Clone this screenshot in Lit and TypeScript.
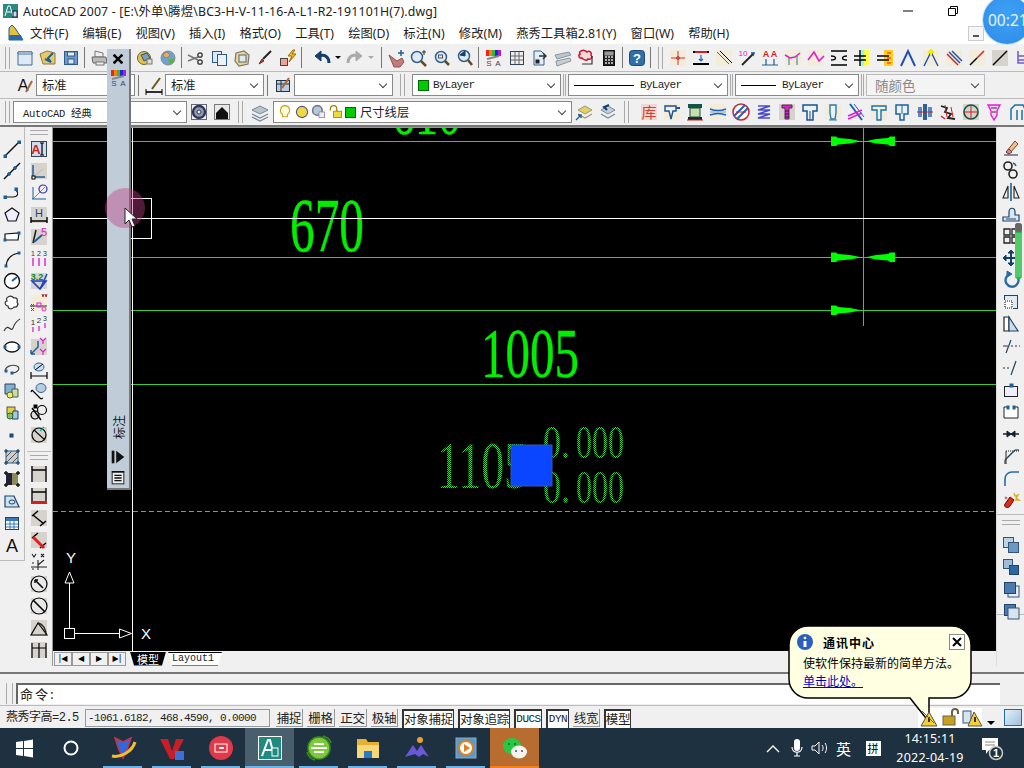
import { LitElement, html, css } from "lit";
import { customElement } from "lit/decorators.js";
import { unsafeSVG } from "lit/directives/unsafe-svg.js";

const l = (a: number, b: number, c: number, d: number, col = "#000", w = 1) =>
  `<line x1="${a}" y1="${b}" x2="${c}" y2="${d}" stroke="${col}" stroke-width="${w}"/>`;
const r = (x: number, y: number, w: number, h: number, f = "#fff", s = "#000") =>
  `<rect x="${x}" y="${y}" width="${w}" height="${h}" fill="${f}" stroke="${s}"/>`;
const c = (x: number, y: number, R: number, f = "none", s = "#000", w = 1) =>
  `<circle cx="${x}" cy="${y}" r="${R}" fill="${f}" stroke="${s}" stroke-width="${w}"/>`;
const p = (d: string, f = "none", s = "#000", w = 1) =>
  `<path d="${d}" fill="${f}" stroke="${s}" stroke-width="${w}"/>`;
const t = (x: number, y: number, v: string, col = "#000", size = 8, w = 400) =>
  `<text x="${x}" y="${y}" fill="${col}" font-size="${size}" font-weight="${w}" font-family="Liberation Sans" text-anchor="middle">${v}</text>`;
const B = "#1f5f96", DB = "#123f6c", M = "#e020d0", bg = (f: string) => `<rect x="2" y="2" width="16" height="16" fill="${f}"/>`;
const beige = bg("#f2ecd8"), gray = bg("#d6d2cc");

const I: Record<string, string> = {
  new: p("M3 4h14v13H3z", "#dfeaf5", "#3d6f99") + p("M3 4h14v2H3z", "#fff", "#3d6f99"),
  open: p("M2 6l7-3 8 2v11H5z", "#e8c96a", "#8a7a3a") + p("M15 5l-5 5 3 4-6-3", "none", B, 2),
  save: r(3.5, 3.5, 13, 13, "#6e9ac6", "#2b5b8c") + r(6.5, 4, 7, 4, "#eef", "#2b5b8c") + r(7, 11, 6, 5, "#d8e4ef", "#2b5b8c"),
  print: p("M6 3l8 2v4H6z", "#eee", "#777") + p("M3 9h14l1 6H4z", "#bbb", "#666") + r(7, 14, 8, 3, "#eee", "#777"),
  pub: c(9, 10, 6.5, "#e5c04a", "#6a6a30") + p("M6 7l6-2 3 5-6 3z", "#7aa0c8", "#355") + r(12, 11, 5, 5, "#ddd", "#777"),
  globe: c(10, 10, 7, "#6aa3d8", "#888") + p("M5 6l4-2 3 3-3 3-3-1z", "#e8b040", "#a77") + p("M10 12l5-2 1 4-4 3z", "#5ab050", "#7a7"),
  cut: c(14, 7, 2.2, "none", "#333", 1.3) + c(14, 14, 2.2, "none", "#333", 1.3) + l(2, 7, 12, 12, "#777", 1.6) + l(2, 13, 12, 9, "#777", 1.6),
  copy: r(3.5, 3.5, 9, 11, "#dce8f3", "#2b5b8c") + r(8.5, 6.5, 9, 11, "#eaf2f9", "#2b5b8c"),
  paste: p("M4 5l8-2 5 4-1 9-9 2-4-5z", "#e8d48a", "#777", 1.2) + r(7, 7, 7, 7, "#dfe9f2", "#567"),
  brush: p("M4 16l3-5 2 2z", "#c33", "#633") + l(8, 11, 16, 3, "#222", 2),
  zap: r(2.5, 10.5, 7, 7, "#f0a090", "#444") + p("M15 2l-5 6h4l-3 6 7-8h-4l3-4z", "#f0c020", "#a06a00"),
  undo: p("M17 15c0-6-4-9-10-7", "none", DB, 3) + p("M3 8l6-5v10z", DB, DB),
  redo: p("M3 15c0-6 4-9 10-7", "none", "#aaa", 3) + p("M17 8l-6-5v10z", "#aaa", "#aaa"),
  dd: p("M2 8h6l-3 3z", "#000", "none"),
  dd2: p("M2 8h6l-3 3z", "#aaa", "none"),
  hand: p("M3 7l8 6 5-3 2 4-4 5H8z", "#c77a7a", "#855") + p("M15 2v6M12 5h6", "none", B, 1.5),
  zplus: c(8, 9, 5.5, "#dfeaf5", "#34608a", 1.5) + l(12, 13, 17, 18, "#6a4a20", 2.5) + p("M15 2v5M13 4h4", "none", "#333"),
  zwin: c(9, 9, 5.5, "#dfeaf5", "#34608a", 1.5) + r(6.5, 7, 4, 3, "none", "#555") + l(13, 13, 17, 17, "#6a4a20", 2.5),
  zprev: c(9, 8, 5.5, "#dfeaf5", "#34608a", 1.5) + p("M5 7l5-4v5z", DB, DB) + l(13, 12, 17, 17, "#6a4a20", 2.5),
  pal: `<rect x="3" y="2" width="3" height="6" fill="#e22"/><rect x="6" y="2" width="3" height="6" fill="#e80"/><rect x="9" y="2" width="3" height="6" fill="#3b3"/><rect x="12" y="2" width="3" height="6" fill="#22d"/><rect x="15" y="2" width="3" height="6" fill="#a2c"/>` + l(4, 11, 16, 8, "#888", 2) + t(6, 18, "S", "#446", 8) + t(15, 18, "A", "#446", 8),
  grid: r(3.5, 3.5, 13, 13, "#eee", "#345") + p("M8 4v12M12 4v12M4 8h12M4 12h12", "none", "#666"),
  docarr: p("M4 3h7l3 3v11H4z", "#e3edf6", "#34608a") + p("M9 8h7M13 5l3 3-3 3", "none", "#333", 1.4) + r(6, 12, 3, 3, "#222", "#222"),
  pipes: p("M2 7l14-3 2 3-14 4z", "#bcc6cd", "#8b98a0") + p("M3 13l14-3 1 3-14 5z", "#c7cfd4", "#8b98a0"),
  cloud: p("M5 3c3-2 5 0 6 1 3-2 5 1 4 3 2 2 0 5-3 4 0 2-5 1-6-1-3 1-4-3-2-4-1-1 0-3 1-3z", "#f3dada", "#d01830", 1.6) + p("M16 8v8H6", "none", "#333", 1.2),
  calc: r(4.5, 2.5, 11, 15, "#222", "#111") + r(6, 4, 8, 3, "#999", "#999") + p("M6 9h2M9 9h2M12 9h2M6 12h2M9 12h2M12 12h2M6 15h2M9 15h2M12 15h2", "none", "#ddd", 1.6),
  help: `<rect x="2.5" y="2.5" width="15" height="15" rx="3" fill="#2f6ea8" stroke="#1a4a78"/>` + t(10, 15, "?", "#fff", 13, 700),
  y1: beige + p("M10 3v14M3 10h14", "none", "#d03030") + c(10, 10, 1.5, "none", "#d03030"),
  y2: l(2, 4, 18, 4, "#000", 2) + l(2, 16, 18, 16, "#000", 2) + p("M10 7v6M8 11l2 2 2-2", "none", "#1f5fd0", 1.2) + l(4, 4, 16, 4, "#d02020", 2),
  y3: beige + l(3, 4, 15, 16, "#d03030") + l(6, 3, 18, 15, "#000", 1),
  y4: t(6, 8, "10", M, 8) + l(5, 17, 17, 5, "#222", 1.8) + p("M14 5l3 0-1 3", "none", B, 1.4),
  y5: t(6, 9, "A", "#d02020", 9, 700) + t(14, 9, "A", "#d02020", 9, 700) + p("M2 17h16M6 17v-6M14 17v-6", "none", B, 1.2),
  y6: beige + p("M2 7l5 3 5-1 5-4", "none", M, 1.5) + p("M6 17v-7M14 17V8", "none", "#2d7a9a"),
  y7: beige + p("M2 12l6-8 5 9 5-5", "none", M, 1.6),
  y8: p("M2 3h16M2 17h16M2 8c6 0 6 4 0 4M18 8c-6 0-6 4 0 4", "none", "#000", 1.4),
  y9: `<rect x="9" y="2" width="3" height="16" fill="#8fe"/><rect x="12" y="2" width="5" height="16" fill="#ff4"/>` + p("M2 8h12M2 12h12M8 2v16", "none", "#000", 1.4),
  y10: `<rect x="9" y="2" width="9" height="16" fill="#fc2"/>` + p("M2 8h12M2 12h12", "none", "#000", 1.6) + p("M12 5h4M12 10h4M12 15h4", "none", "#f11", 1.2),
  y11: p("M3 18L10 3l7 15", "none", "#1f4fb0", 2),
  y12: beige + p("M3 18L10 4l7 14", "none", "#1f4fb0", 1.4) + p("M7 5l3-3 3 3M10 2v6", "none", "#ee0", 2),
  y13: beige + l(3, 6, 14, 17, "#d02020", 1.4) + l(5, 4, 16, 15, "#1f4fb0", 1.4) + l(8, 3, 18, 13, "#1f4fb0", 1.4),
  y14: beige + l(3, 17, 10, 10, "#000", 1.4) + l(10, 10, 17, 3, "#d02020", 1.4),
  y15: gray + l(3, 17, 17, 3, "#000", 1.5),
  y16: p("M5 3v12h10M5 8h8M5 12h8", "none", "#6a5acd", 1.5),
  z1: bg("#f2d8d4") + `<text x="10" y="16" fill="#d04030" font-size="15" font-family="Noto Sans CJK SC" text-anchor="middle">库</text>`,
  z2: beige + p("M3 4h11v5h-3l-2 8-2-8H3z", "#e8f0fa", "#1f4f8f", 1.4) + l(14, 6, 18, 6, "#1f4f8f", 2),
  z3: `<rect x="3" y="2" width="14" height="4" fill="#154"/><rect x="3" y="15" width="14" height="3" fill="#222"/><rect x="5" y="6" width="10" height="9" fill="#cda" stroke="#154"/>` + l(2, 18, 18, 18, "#d02020"),
  z4: beige + p("M2 7c5 2 11 2 16 0M2 13c5-2 11-2 16 0", "none", "#1f60c0", 1.5) + p("M2 10h16", "none", "#7ab"),
  z5: c(10, 10, 8, "#fff", "#c03030", 1.6) + p("M3 14L14 3M6 17L17 6", "none", "#2a5fc0", 2) + l(5, 10, 15, 10, "#d02020", 1),
  z6: p("M4 4h12L4 8h12L4 12h12L4 16h12", "none", "#4a4ad0", 1.6),
  z7: gray + p("M5 3h10v3h-3v11H8V6H5z", M, "#503050") + p("M8 9h4M8 12h4M8 15h4", "none", "#222"),
  z8: p("M3 3h14v6h-4v9H7V9H3z", "#e8f2fa", "#1f4f8f", 1.5) + p("M10 9v9", "none", "#1f4f8f"),
  z9: beige + p("M7 3h6v8l-1 6H8l-1-6z", "#e8f4fa", "#2a7aaa", 1.4) + l(6, 18, 14, 18, "#2a7aaa"),
  z10: l(4, 2, 16, 18, "#2060b0", 2) + l(8, 2, 18, 15, "#2060b0", 1) + p("M2 14l14-6M2 17l14-6", "none", M, 1.5),
  z11: beige + p("M3 4h14v4h-5v10H8V8H3z", "#e8f2fa", "#1f6f9f", 1.4),
  z12: p("M4 3h12v9h-4v6H8v-6H4z", "#e8f2fa", "#1f5f9f", 1.5) + l(10, 3, 10, 12, "#1f5f9f"),
  z13: `<rect x="3" y="5" width="4" height="10" fill="#5a8ac0"/><rect x="13" y="5" width="4" height="10" fill="#5a8ac0"/><rect x="8" y="2" width="4" height="16" fill="#2f5fa0"/>` + l(2, 10, 18, 10, "#b22"),
  z14: p("M3 4l6 2-2 4 6 2-3 4 7 1", "none", "#222", 1.8) + p("M7 3l2 12M13 5l2 10", "none", "#d02020", 1) + l(3, 14, 7, 17, "#d02020", 1.4),
  z15: gray + c(10, 10, 7, "none", "#154", 1.6) + p("M10 3v14M3 10h14", "none", "#d02020"),
  z16: p("M4 3h12l-3 6v4l-3 5-3-5V9z", "#f2d0f2", M, 1.4) + p("M7 6h6M8 10h4", "none", "#333"),
  z17: p("M4 18V7l4-4h8l2 4v11M10 8v10M15 8v10", "none", "#1f6f9f", 1.5),
  tstyle: t(8, 16, "A", "#111", 16) + l(11, 17, 17, 6, "#aa6633", 2),
  dstyle: l(2, 17, 18, 17, "#000", 1.6) + p("M2 14v6M18 14v6", "none", "#000") + l(8, 14, 16, 3, "#6a5a20", 2),
  tbl: r(3.5, 5.5, 13, 11, "#bcd", "#234") + p("M4 9h12M8 6v10", "none", "#234") + l(9, 13, 16, 3, "#a63", 2),
  gear: c(10, 10, 6, "#8aa0b5", "#335", 2.4) + c(10, 10, 2, "#eee", "#335") + r(2.5, 2.5, 15, 15, "none", "#667"),
  house: r(2.5, 2.5, 15, 15, "#e8e8e8", "#777") + p("M4 11l6-6 6 6v6H4z", "#111", "none"),
  layers: p("M2 8l8-4 8 4-8 4z", "#b9c4cc", "#789") + p("M2 12l8 4 8-4", "none", "#789", 1.2) + p("M2 15l8 4 8-4", "none", "#789", 1.2),
  laycur: p("M4 8l7-4 7 4-7 4z", "#e8d060", "#997") + p("M4 12l7 4 7-4", "none", "#997", 1.2) + p("M2 18l5-5M4 13h3v3", "none", B, 1.4),
  layprev: p("M4 8l7-4 7 4-7 4z", "#c7d0d8", "#789") + p("M4 12l7 4 7-4", "none", "#789", 1.2) + p("M12 3l-5 2 3 3", "none", DB, 2),
  line: l(3, 17, 17, 3, "#111", 1.4) + r(2, 16, 2.5, 2.5, B, B) + r(16, 2, 2.5, 2.5, B, B),
  xline: l(2, 18, 18, 2, "#111", 1.4) + c(7, 13, 1.4, B, B) + c(13, 7, 1.4, B, B),
  pline: p("M3 14h8c5 0 6-4 3-7", "none", "#111", 1.2) + r(2, 13, 2.5, 2.5, B, B) + r(13, 5, 2.5, 2.5, B, B),
  poly: p("M10 3l7 5-3 8H6L3 8z", "#eef", "#111", 1.2),
  rect: p("M3 7l14-1-1 7H3z", "#fff", "#111", 1.2) + r(2, 12, 2, 2, B, B) + r(16, 5, 2, 2, B, B),
  arc: p("M4 17C5 9 10 5 17 4", "none", "#111", 1.2) + r(3, 16, 2, 2, B, B) + r(16, 3, 2, 2, B, B),
  circ: c(10, 10, 7.5, "#fff", "#111", 1.4) + l(10, 10, 15, 6, B, 2),
  spline0: p("M6 4c3-2 5 0 6 1 3-1 4 2 3 4 2 2 0 6-3 5-2 3-6 2-6-1-3 0-4-5-1-5-1-2 0-4 1-4z", "#fff", "#333", 1.2),
  spl: p("M2 16c4-9 7 2 9-3 2-6 4-7 7-9", "none", "#333", 1.1),
  ell: `<ellipse cx="10" cy="10" rx="7.5" ry="5" fill="#fff" stroke="#111" stroke-width="1.3"/>` + r(2, 9, 2, 2, B, B) + r(16, 9, 2, 2, B, B),
  earc: p("M4 13c-3-5 6-8 11-6 4 2 1 7-5 7", "none", "#444", 1.2) + r(9, 13, 2, 2, B, B) + r(3, 11, 2, 2, B, B),
  ins: p("M3 3h10v10H3z", "#7fb0d8", "#345") + p("M10 8h6v8h-6z", "#c7e0a0", "#555") + c(8, 14, 3, "#ee6", "#663"),
  blk: r(5, 4, 8, 7, "#e0d040", "#555") + p("M11 8h5v8h-6z", "#a8c8e0", "#246") + c(8, 13, 3, "#7fc070", "#363"),
  pt: r(8, 9, 3, 3, B, DB),
  hatch: r(4, 4, 12, 12, "#ccc", B) + p("M4 10l6-6M4 16L16 4M10 16l6-6", "none", "#555") + p("M2 4h4M14 4h4M2 16h4M14 16h4M4 2v4M16 2v4M4 14v4M16 14v4", "none", DB, 1.2),
  grad: `<rect x="4" y="4" width="12" height="12" fill="#8a8a5a"/>` + p("M2 4h4M14 4h4M2 16h4M14 16h4M4 2v4M16 2v4M4 14v4M16 14v4", "none", "#111", 1.4) + `<rect x="4" y="4" width="6" height="12" fill="#223"/>`,
  region: p("M3 5h9l5 11H3z", "#cde2f2", "#246", 1.2) + `<ellipse cx="10" cy="11" rx="3" ry="2" fill="none" stroke="#246"/>`,
  table: r(3.5, 4.5, 13, 12, "#fff", "#246") + `<rect x="4" y="5" width="12" height="3" fill="#3a7ab8"/>` + p("M4 11h12M4 14h12M8 8v8M12 8v8", "none", "#3a7ab8"),
  mtext: `<text x="10" y="17" font-size="18" font-family="Liberation Sans" text-anchor="middle" fill="#111">A</text>`,
  dtxt: r(2.5, 2.5, 15, 15, "#cde", "#345") + t(7, 15, "A", "#d02020", 13, 700) + p("M13 4v12M11 4h4M11 16h4", "none", "#000", 1.2),
  dlin: gray + p("M4 16V4M4 16h12", "none", B, 1.5) + l(4, 16, 14, 8, "#bbb") + r(3, 15, 3, 3, "#fff", "#000"),
  dord: p("M4 16l12-12", "none", "#888") + c(14, 6, 4, "none", "#3030b0", 1.2) + p("M3 16h14M4 4v12", "none", B, 1),
  dh: gray + p("M2 16h16M2 12v6M18 12v6", "none", "#000", 1.4) + t(10, 12, "H", "#1f3f8f", 11),
  dlead: gray + l(4, 16, 7, 3, "#222", 1.6) + l(5, 15, 13, 8, B, 2) + t(15, 9, "5", M, 11),
  dnum: t(4, 7, "1", "#333", 7) + t(10, 7, "2", "#333", 7) + t(16, 7, "3", "#333", 7) + p("M4 9v8M10 9v8M16 9v8", "none", M, 1.4),
  dtol: gray + t(8, 9, "3.2", "#0a8a2a", 9, 700) + p("M3 10h14l-6 8z", "none", "#1f3fc0", 1.6) + l(11, 18, 18, 3, "#1f3fc0", 1.4),
  dyy: beige + l(1, 13, 18, 13, "#333") + r(8, 10, 4, 4, "none", M) + c(15, 16, 2, "none", M) + p("M13 1l1 3 1-3M16 1l1 3 1-3M2 11l3 3M5 11l-3 3M2 15l3 3M5 15l-3 3", "none", "#b03030"),
  dnum2: t(4, 10, "1", "#333", 8) + t(10, 8, "2", "#333", 8) + t(16, 6, "3", "#333", 7) + p("M4 12v5M10 11v5M16 8v5", "none", M, 1.3),
  dxy: gray + p("M11 1l3 3 3-3M14 4v3M11 12l3 3 3-3M14 15v3", "none", M, 1.2) + p("M2 17l7-7V4M2 17h4M2 17v-4", "none", B, 1.5),
  ddia: p("M2 17h16M2 13v7M18 13v7", "none", "#000", 1.2) + `<ellipse cx="10" cy="8" rx="5" ry="4" fill="#cde" stroke="#2a6aa0"/>` + l(6, 11, 14, 5, "#000"),
  drad: p("M3 9l9 9M3 9l-1 2M12 18l2-1", "none", "#000", 1.2) + `<ellipse cx="12" cy="7" rx="5" ry="4.5" fill="#bcd" stroke="#2a6aa0"/>`,
  dc1: c(6, 12, 4, "#ddd", "#000", 1.2) + c(13, 7, 4.5, "#eee", "#000", 1.2) + l(3, 5, 12, 17, "#000", 1.4) + r(5, 2, 3, 3, "#000", "#000"),
  dc2: gray + c(10, 10, 7, "none", "#000", 1.2) + l(5, 5, 16, 15, "#111", 1.2) + l(15, 2, 11, 6, "#0a8", 1.2),
  d1: gray + p("M3 2v16M17 2v16M3 6h14", "none", "#000", 1.3),
  d2: gray + p("M3 2v16M17 2v16M3 6h14", "none", "#000", 1.3) + `<rect x="2" y="15" width="16" height="3" fill="#d02020"/>`,
  d3: gray + p("M3 8l6-5M11 18l6-5M4 7l11 9", "none", "#000", 1.5),
  d4: gray + p("M3 8l6-5M11 18l6-5", "none", "#000", 1.5) + l(4, 7, 15, 18, "#e02020", 3),
  d5: p("M2 15h16M9 18V8M9 13l6-5M3 11h2M3 17h2M3 2l2 3 2-3M12 2l3 3M15 2l-3 3", "none", "#222", 1.1),
  d6: gray + c(10, 10, 8, "#e8e8e8", "#000", 1.2) + l(6, 6, 14, 14, "#000", 1.6) + p("M6 6h3M6 6v3", "none", "#000", 1.4),
  d7: gray + c(10, 10, 8, "#e8e8e8", "#000", 1.2) + l(4, 4, 16, 16, "#000", 1.6),
  d8: gray + p("M2 17h16L9 5z", "none", "#000", 1.2) + p("M9 5c5 1 8 6 8 12", "none", "#222", 1.4),
  d9: gray + p("M3 3v15M10 3v15M17 3v15M3 8h14", "none", "#000", 1.2),
  eraser: p("M3 17h14", "none", "#223") + p("M5 14L14 3l3 3-9 10z", "#eec08a", "#743") + p("M5 14l3-3 3 3-3 2z", "#d08a9a", "#743"),
  rcopy: c(7, 6, 4, "none", "#222", 1.6) + c(12, 14, 4, "none", "#222", 1.6) + p("M12 3a5 5 0 0 1 3 3", "none", B, 1.4),
  mirror: p("M2 16l5-12v12z", "none", "#222", 1.1) + p("M18 16l-5-12v12z", "none", "#222", 1.1) + l(10, 1, 10, 19, B, 1.6),
  offset: p("M2 17v-4h6V8c0-5 6-5 6 0v3h4v6z", "#d8e8f4", "#246", 1.2) + p("M5 15h10", "none", "#246"),
  array: p("M3 3h6v6H3zM11 3h6v6h-6zM3 11h6v6H3zM11 11h6v6h-6z", "none", "#222", 1.3),
  move: p("M2 10h16M10 2v16", "none", DB, 2) + p("M2 10l3-3v6zM18 10l-3-3v6zM10 2l-3 3h6zM10 18l-3-3h6z", DB, DB),
  rotate: p("M15 5a6.5 6.5 0 1 1-6-1", "none", "#2a6aa8", 2.4) + p("M6 1l5 3-5 3z", "#2a6aa8", "#2a6aa8"),
  scale: r(3.5, 3.5, 13, 13, "#dfeaf5", "#246") + r(3.5, 8.5, 8, 8, "#fff", "#fff") + `<rect x="4" y="9" width="7" height="7" fill="none" stroke="#000" stroke-dasharray="1 1"/>`,
  stretch: p("M3 3h5v14H3z", "#fff", "#222", 1.2) + p("M8 3l9 14H8z", "#cde", "#246", 1.2),
  trim: l(5, 17, 10, 4, "#246", 1.2) + l(2, 10, 7, 10, "#333") + `<line x1="10" y1="10" x2="19" y2="10" stroke="#333" stroke-dasharray="2 2"/>`,
  extend: `<line x1="2" y1="10" x2="10" y2="10" stroke="#333" stroke-dasharray="2 2"/>` + l(10, 17, 15, 3, "#246", 1.2),
  brk1: r(3.5, 6.5, 13, 10, "#eef", "#222") + r(9, 4, 3, 3, B, B),
  brk2: p("M8 5H3v11h14V5h-5", "#fff", "#222") + r(6, 4, 2, 3, B, B) + r(12, 4, 2, 3, B, B),
  join: p("M2 10h16", "none", "#111", 1.4) + p("M6 7l4 3-4 3zM14 7l-4 3 4 3z", "#123", "#123"),
  cham: `<line x1="5" y1="5" x2="5" y2="18" stroke="#222"/><line x1="5" y1="5" x2="18" y2="5" stroke="#222" stroke-dasharray="1 1"/>` + l(4, 14, 14, 4, "#246", 1.5) + l(4, 14, 4, 18, "#222") + l(14, 4, 18, 4, "#222"),
  fil: p("M4 18V11c0-4 3-7 7-7h7", "none", "#2a6aa8", 1.6),
  expl: p("M4 14c-2 3 3 5 5 2l4-6-4-3z", "#d03020", "#700") + p("M13 3l1 3 3-1-2 3 3 2-4 0", "none", "#d8b020", 1.4) + c(5, 8, 1, "#a77", "#a77"),
  o1: r(2.5, 2.5, 10, 10, "#bcd2e6", "#357") + r(7.5, 7.5, 10, 10, "#6e98c0", "#357"),
  o2: r(2.5, 2.5, 9, 9, "#9fbcd8", "#357") + r(8.5, 8.5, 9, 9, "#2e68a8", "#246"),
  o3: r(7, 7, 11, 11, "#eef", "#357") + r(3.5, 3.5, 11, 11, "#4a7ab0", "#246"),
  o4: r(3.5, 3.5, 11, 11, "#4a7ab0", "#246") + r(7, 7, 11, 11, "#d8e4ee", "#357"),
  close: p("M4 4l12 12M16 4L4 16", "none", "#000", 3.4) + p("M3 5h4M13 5h4M3 15h4M13 15h4", "none", "#000", 2),
  play: `<rect x="3" y="3" width="3" height="14" fill="#111"/><path d="M8 3v14l9-7z" fill="#111"/>`,
  lst: r(3.5, 3.5, 13, 13, "#eee", "#111") + p("M3 3h14M6 7h8M6 10h8M6 13h8", "none", "#111", 1.4),
};

const svgI = (n: string) => html`<svg class="ic" viewBox="0 0 20 20">${unsafeSVG(I[n] || "")}</svg>`;
const cell = (n: string) => html`<span class="cell">${svgI(n)}</span>`;
const vcell = (n: string) => html`<span class="vcell">${svgI(n)}</span>`;

const row1a = ["new","open","save","|","print","","pub","globe","|","cut","copy","paste","brush","zap","|"];
const row1b = ["|","hand","zplus","zwin","zprev","|","pal",".","grid","docarr","pipes","cloud","calc","|","help"];
const row1c = ["y1","y2","y3","y4","y5","y6","y7","y8","y9","y10","y11","y12","y13","y14","y15","y16"];
const row3c = ["z1","z2","z3","z4","z5","z6","z7","z8","z9","z10","z11","z12","z13","z14","z15","z16","z17"];
const draw = ["line","xline","pline","poly","rect","arc","circ","spline0","spl","ell","earc","ins","blk","pt","hatch","grad","region","table","mtext"];
const dim1 = ["dtxt","dlin","dord","dh","dlead","dnum","dtol","dyy","dnum2","dxy","ddia","drad","dc1","dc2"];
const dim2 = ["d1","d2","d3","d4","d5","d6","d7","d8","d9"];
const modify = ["eraser","rcopy","mirror","offset","array","move","rotate","scale","stretch","trim","extend","brk1","brk2","join","cham","fil","expl"];
const order = ["o1","o2","o3","o4"];
const menus = ["文件(F)","编辑(E)","视图(V)","插入(I)","格式(O)","工具(T)","绘图(D)","标注(N)","修改(M)","燕秀工具箱2.81(Y)","窗口(W)","帮助(H)"];
const hItems = (list: string[]) => list.map((n) => n === "|" ? html`<span class="sep"></span>` : n === "." ? html`<span class="gap1"></span>` : cell(n));
const greenDims = [141, 257, 310];

@customElement("app-root")
export class AppRoot extends LitElement {
  static styles = css`
    :host { display:block; width:1024px; height:768px; position:relative; overflow:hidden; background:#f0f0f0;
      font-family:"Noto Sans","Noto Sans CJK SC",sans-serif; font-size:12.3px; color:#222; }
    .app { display:flex; flex-direction:column; width:1024px; height:768px; }
    .ic { width:20px; height:20px; display:block; overflow:visible; }
    .dd { width:10px; height:20px; display:block; flex:none; }
    .dd2 { width:13px; height:20px; display:block; flex:none; }
    .cell { width:23px; height:24px; display:flex; align-items:center; justify-content:center; flex:none; }
    .vcell { width:24px; height:22px; display:flex; align-items:center; justify-content:center; flex:none; }
    .sep { width:1px; height:21px; background:#777; margin:0 2px; flex:none; }
    .sep3 { width:1px; height:21px; background:#777; margin:0 3px; flex:none; }
    .gap1 { width:1px; flex:none; }
    .gap3 { width:3px; flex:none; }
    .gap5 { width:5px; flex:none; }
    .title { height:22px; display:flex; align-items:center; background:#fff; padding-left:3px; gap:5px; font-size:12.3px; letter-spacing:.17px; flex:none; position:relative; white-space:nowrap; }
    .title .logo { width:15px; height:14px; }
    .winbtns { margin-left:auto; display:flex; gap:33px; padding-right:65px; align-items:center; }
    .menu { height:22px; display:flex; align-items:center; background:#fff; padding-left:7px; flex:none; }
    .menu .logo { width:18px; height:18px; margin-right:5px; }
    .menu .m { margin-right:14.2px; white-space:nowrap; }
    .mdi { margin-left:auto; width:16px; height:15px; border:1px solid #ccc; background:#f6f6f6; margin-right:40px; display:flex; align-items:flex-end; justify-content:center; padding-bottom:3px; box-sizing:border-box; }
    .mdi i { width:6px; height:2px; background:#555; }
    .tbar { display:flex; align-items:center; background:#f0f0f0; border-bottom:1px solid #bbb; flex:none; overflow:hidden; box-sizing:border-box; }
    .r1 { height:28px; padding-left:5px; }
    .r2 { height:27px; padding-left:13px; }
    .r3 { height:28px; padding-left:5px; border-bottom:2px solid #777; }
    .grip { width:5px; height:22px; border-left:1px solid #aaa; border-right:1px solid #aaa; margin:0 3px 0 0; flex:none; box-sizing:border-box; }
    .ngrip { width:3px; height:22px; border-left:1px solid #aaa; border-right:1px solid #aaa; margin:0 2px; flex:none; box-sizing:border-box; }
    .combo { height:22px; box-sizing:border-box; border:1px solid #888; background:#fff; display:flex; align-items:center; padding-left:5px; position:relative; flex:none;
      font-family:"Liberation Mono","Noto Sans CJK SC",monospace; font-size:11px; letter-spacing:-.7px; white-space:nowrap; }
    .combo::after { content:""; position:absolute; right:6px; top:6px; width:5px; height:5px; border-right:1px solid #444; border-bottom:1px solid #444; transform:rotate(45deg); }
    .combo.off { background:#f4f4f4; color:#888; border-color:#bbb; padding-left:8px; }
    .combo.pad9 { padding-left:9px; font-size:10.5px; letter-spacing:-.3px; }
    .combo.pad3 { padding-left:3px; }
    .w99 { width:99px; } .w149 { width:149px; } .w160 { width:160px; } .w124 { width:124px; } .w119 { width:119px; } .w174 { width:174px; } .w299 { width:299px; }
    .cjk { font-family:"Noto Sans CJK SC",sans-serif; font-size:12.3px; letter-spacing:0; }
    .off.cjk { font-size:13.5px; }
    .swatch { width:9px; height:9px; background:#0c0; border:1px solid #060; margin-right:4px; flex:none; }
    .stroke { height:1px; background:#000; margin-right:6px; flex:none; }
    .s60 { width:60px; } .s35 { width:35px; }
    .m5 { margin-left:5px; } .m7 { margin-left:7px; } .m6 { margin-left:6px; }
    .lic { width:16px; height:16px; flex:none; margin-right:1px; }
    .main { display:flex; flex:none; height:539px; }
    .dockl { width:53px; display:flex; flex:none; align-items:flex-start; background:#f0f0f0; }
    .vt { width:25px; display:flex; flex-direction:column; box-sizing:border-box; border-right:1px solid #bbb; border-bottom:1px solid #bbb; align-items:center; flex:none; }
    .vt.a { padding-top:11px; height:434px; }
    .col2 { display:flex; flex-direction:column; width:26px; border-right:1px solid #999; box-sizing:border-box; height:539px; overflow:hidden; margin-left:2px; }
    .col2 .vt { width:24px; border-right:none; }
    .vgrip { width:18px; height:5px; border:1px solid #aaa; border-left:none; border-right:none; margin:3px 0; flex:none; box-sizing:border-box; }
    .v1 { height:325px; } .v2 { border-bottom:none !important; }
    .canvasbox { flex:1; display:flex; flex-direction:column; min-width:0; border-top:1px solid #999; box-sizing:border-box; }
    .canvas { display:block; width:943px; height:523px; background:#000; flex:none; }
    .tabs { height:15px; display:flex; align-items:center; background:#f0f0f0; font-family:"Liberation Mono","Noto Sans CJK SC",monospace; font-size:10px; flex:none; padding-left:1px; }
    .nav { width:18px; height:14px; box-sizing:border-box; border:1px solid #999; display:flex; align-items:center; justify-content:center; font-size:8px; color:#000; background:#f0f0f0; font-family:"DejaVu Sans",sans-serif; white-space:nowrap; }
    .tab { height:14px; display:flex; align-items:center; padding:0 7px; box-sizing:border-box; clip-path:polygon(0 0,100% 0,calc(100% - 4px) 100%,4px 100%); }
    .tab.on { background:#000; color:#fff; width:36px; margin-left:4px; font-family:"Noto Sans CJK SC"; font-size:11px; white-space:nowrap; }
    .tab.off { background:#fff; border-top:1px solid #000; width:54px; margin-left:2px; padding:0 4px; border-bottom:1px solid #000; }
    .dockr { width:28px; flex:none; display:flex; flex-direction:column; align-items:center; border-left:1px solid #ddd; box-sizing:border-box; }
    .vt.mod { width:27px; border-right:none; padding-top:10px; height:388px; }
    .vt.ord { width:27px; border-right:none; height:100px; padding-top:2px; }
    .ord .spc { height:6px; flex:none; }
    .gapbar { height:8px; border-bottom:2px solid #777; flex:none; box-sizing:border-box; }
    .gapbar2 { height:8px; flex:none; }
    .cmd { height:23px; display:flex; align-items:stretch; padding:1px 24px 1px 6px; flex:none; box-sizing:border-box; }
    .cmd .grip2 { width:7px; border:1px solid #aaa; border-top:none; border-bottom:none; margin-right:3px; flex:none; box-sizing:border-box; }
    .cmdline { flex:1; background:#fff; border-top:2px solid #666; border-left:2px solid #666; box-sizing:border-box; font-family:"Noto Sans CJK SC"; font-size:13px; padding-left:2px; letter-spacing:2px; line-height:18px; }
    .status { height:23px; display:flex; align-items:flex-start; padding:3px 0 0 6px; flex:none; box-sizing:border-box; border-top:1px solid #bbb; overflow:hidden; position:relative;
      font-family:"Liberation Mono","Noto Sans CJK SC",monospace; font-size:12.5px; }
    .hgt { width:79px; letter-spacing:-.5px; line-height:18px; white-space:nowrap; font-size:12px; }
    .coord { width:185px; height:18px; box-sizing:border-box; border:1px solid #999; font-size:11px; letter-spacing:-.6px; line-height:16px; padding-left:2px; margin-right:6px; white-space:nowrap; }
    .sb { height:18px; box-sizing:border-box; display:flex; align-items:center; justify-content:center; margin-right:4px; border-right:1px solid #999; border-bottom:1px solid #999; background:#f0f0f0; white-space:nowrap; flex:none; font-family:"Noto Sans CJK SC"; letter-spacing:-.2px; }
    .sb.on { background:#fff; border:2px solid #333; border-bottom:none; border-right-width:1px; height:22px; align-items:flex-start; line-height:16px; }
    .sb.lat { font-family:"Liberation Mono"; font-size:11px; letter-spacing:-.5px; }
    .w27 { width:27px; } .w28 { width:28px; } .w52 { width:52px; } .w22 { width:23px; }
    .traybox { position:absolute; left:918px; top:2px; width:64px; height:21px; background:#fff; }
    .tri { position:absolute; left:987px; top:15px; width:0; height:0; border-left:4px solid transparent; border-right:4px solid transparent; border-top:4px solid #000; }
    .sq { position:absolute; left:1004px; top:3px; width:16px; height:15px; background:linear-gradient(135deg,#e4eff8,#9fc0de); border:1px solid #2a6a9a; }
    .taskbar { height:40px; background:#1e3140; display:flex; color:#fff; flex:none; }
    .tk { height:40px; display:flex; align-items:center; justify-content:center; position:relative; flex:none; width:49px; box-sizing:border-box; }
    .tk svg { width:28px; height:28px; display:block; }
    .w48 { width:48px; } .w50 { width:50px; }
    .tk.run::after { content:""; position:absolute; left:5px; right:5px; bottom:0; height:2px; background:#6db3e8; }
    .tk.act { background:#4a5f6d; } .tk.act::after { left:0; right:0; }
    .tk.wx { background:#b96c2f; } .tk.wx::after { left:0; right:0; background:#f2801c; }
    .tray { margin-left:auto; display:flex; align-items:center; font-size:14px; }
    .ti { height:40px; display:flex; align-items:center; justify-content:center; flex:none; }
    .t24 { width:24px; } .t23 { width:23px; } .t36 { width:36px; } .t46 { width:46px; } .t9 { width:9px; }
    .ti svg { display:block; }
    .clock { width:78px; display:flex; flex-direction:column; align-items:center; font-size:12.5px; line-height:19px; letter-spacing:.2px; }
    .ying { font-family:"Noto Sans CJK SC"; font-size:15px; }
    .pin { font-family:"Noto Sans CJK SC"; font-size:11px; width:15px; height:15px; background:#fff; color:#000; display:flex; align-items:center; justify-content:center; }
    .float { position:absolute; left:107px; top:49px; width:22px; height:439px; background:#c0cdd8; border-right:2px solid #777; border-bottom:2px solid #777; display:flex; flex-direction:column; align-items:center; box-sizing:content-box; }
    .float .fx { height:19px; display:flex; align-items:center; justify-content:center; flex:none; }
    .float .fx .ic { width:14px; height:14px; }
    .float .fp { height:19px; display:flex; align-items:center; justify-content:center; flex:none; }
    .float .spacer { flex:1; }
    .float .vtext { writing-mode:vertical-rl; text-orientation:sideways; transform:rotate(180deg); font-family:"Noto Sans CJK SC"; font-size:12px; color:#111; margin-bottom:7px; }
    .float .b { height:21px; display:flex; align-items:center; flex:none; }
    .float .b .ic { width:18px; height:18px; }
    .pink { position:absolute; left:105px; top:188px; width:40px; height:40px; border-radius:50%; background:rgba(190,60,130,.42); }
    .cursor { position:absolute; left:124px; top:207px; width:14px; height:22px; }
    .timer { position:absolute; left:983px; top:-4px; width:48px; height:48px; border-radius:50%; background:radial-gradient(circle at 50% 40%,#3ea2f4,#2d8ae8); box-shadow:0 0 0 1px #cfe3f6; color:#e8f4ff; font-size:15.5px; display:flex; align-items:center; justify-content:flex-start; padding-left:5px; box-sizing:border-box; white-space:nowrap; }
    .bw { position:absolute; left:0; top:0; }
    .balloon { position:absolute; left:788px; top:625px; width:186px; height:98px; font-family:"Noto Sans CJK SC"; font-size:12px; color:#000; }
    .balloon .shape { position:absolute; left:0; top:0; }
    .bbody { position:relative; padding:8px 0 0 8px; }
    .bhead { display:flex; align-items:center; height:18px; }
    .bhead b { margin-left:9px; font-size:12px; letter-spacing:1px; }
    .bclose { margin-left:auto; margin-right:9px; width:16px; height:16px; box-sizing:border-box; border:1px solid #888; display:flex; align-items:center; justify-content:center; background:#fff; }
    .btxt { margin:3px 0 0 7px; line-height:18px; white-space:nowrap; }
    .blink { color:#00c; text-decoration:underline; display:block; }
  `;

  render() {
    const dotFill = "url(#dots)";
    const sty = "Liberation Serif";
    return html`
      <div class="app">
        <div class="title">
          <svg class="logo" viewBox="0 0 15 14"><rect width="15" height="14" fill="#2a8a80"/><path d="M2 12L5 2h2l3 10M4 8h5" stroke="#fff" fill="none"/><rect x="10" y="7" width="4" height="6" fill="#cde" stroke="#124"/></svg>
          <span>AutoCAD 2007 - [E:\\外单\\腾煜\\BC3-H-V-11-16-A-L1-R2-191101H(7).dwg]</span>
          <span class="winbtns">
            <svg width="12" height="12" viewBox="0 0 12 12"><path d="M1 6h10" stroke="#000"/></svg>
            <svg width="12" height="12" viewBox="0 0 12 12"><path d="M1.5 3.5h7v7h-7zM3.5 3V1.5h7v7H9" stroke="#000" fill="none"/></svg>
          </span>
        </div>
        <div class="menu">
          <svg class="logo" viewBox="0 0 18 18"><path d="M2 4l3-3 3 3 8 12H2z" fill="#e8c040" stroke="#1f5f96"/><path d="M2 16h14l-2-5H2z" fill="#2a6aa8"/></svg>
          ${menus.map((m) => html`<span class="m">${m}</span>`)}
          <span class="mdi"><i></i></span>
        </div>

        <div class="tbar r1">
          <span class="grip"></span>
          ${hItems(row1a)}
          <span class="gap3"></span><span class="gap3"></span>
          ${cell("undo")}<svg class="dd" viewBox="0 0 10 20">${unsafeSVG(I.dd)}</svg>${cell("redo")}<svg class="dd2" viewBox="0 0 13 20">${unsafeSVG(I.dd2)}</svg>
          ${hItems(row1b)}
          <span class="sep"></span><span class="grip m5"></span>
          ${row1c.map(cell)}
        </div>
        <div class="tbar r2">
          ${cell("tstyle")}
          <span class="combo w99 cjk">标准</span><span class="sep3"></span>
          ${cell("dstyle")}
          <span class="combo w99 cjk">标准</span><span class="sep3"></span>
          ${cell("tbl")}
          <span class="combo w99"></span>
          <span class="grip m7"></span><span class="gap3"></span><span class="gap1"></span>
          <span class="combo w149"><i class="swatch"></i>ByLayer</span>
          <span class="ngrip"></span>
          <span class="combo w160"><i class="stroke s60"></i>ByLayer</span>
          <span class="ngrip"></span>
          <span class="combo w124"><i class="stroke s35"></i>ByLayer</span>
          <span class="ngrip"></span>
          <span class="combo w119 off cjk">随颜色</span>
        </div>
        <div class="tbar r3">
          <span class="grip"></span>
          <span class="combo w174 pad9">AutoCAD&nbsp;经典</span>
          ${cell("gear")}${cell("house")}
          <span class="grip m5"></span><span class="gap1"></span><span class="gap1"></span>
          ${cell("layers")}
          <span class="gap1"></span><span class="gap1"></span>
          <span class="combo w299 pad3">
            <svg class="lic" viewBox="0 0 20 20">${unsafeSVG(`<path d="M10 2a6 6 0 0 1 3 11v3H7v-3a6 6 0 0 1 3-11z" fill="#ffd" stroke="#c9a020" stroke-width="1.4"/>`)}</svg>
            <svg class="lic" viewBox="0 0 20 20">${unsafeSVG(c(10, 10, 7, "#f2d840", "#558", 1.4))}</svg>
            <svg class="lic" viewBox="0 0 20 20">${unsafeSVG(c(8, 8, 6, "#b8c8d8", "#778", 2) + r(10, 10, 7, 7, "#eef", "#889"))}</svg>
            <svg class="lic" viewBox="0 0 20 20">${unsafeSVG(p("M3 8V6a4 4 0 0 1 8 0v4", "none", "#a08000", 1.6) + r(7, 9, 10, 8, "#f2d840", "#a08000"))}</svg>
            <i class="swatch"></i><span class="cjk">尺寸线层</span>
          </span>
          ${cell("laycur")}${cell("layprev")}
          <span class="grip m6"></span><span class="gap5"></span>
          ${row3c.map(cell)}
        </div>

        <div class="main">
          <div class="dockl">
            <div class="vt a">${draw.map(vcell)}</div>
            <div class="col2">
              <div class="vt v1"><span class="vgrip"></span>${dim1.map(vcell)}</div>
              <div class="vt v2"><span class="vgrip"></span>${dim2.map(vcell)}</div>
            </div>
          </div>
          <div class="canvasbox">
            <svg class="canvas" viewBox="53 128 943 523">
              <defs>
                <pattern id="dots" width="2" height="2" patternUnits="userSpaceOnUse">
                  <rect width="1" height="1" fill="#3ad84e"/><rect x="1" y="1" width="1" height="1" fill="#3ad84e"/>
                </pattern>
              </defs>
              ${unsafeSVG([141.5, 257.5, 310.5, 384.5].map((y) => l(53, y, 996, y, "#38cc38")).join("") +
                l(863.5, 128, 863.5, 326, "#38cc38") +
                greenDims.map((y) => `<path d="M831 ${y - 4.5}h5l2 1.5 12 1 10 2v0.5l-10 2-12 1-2 1.5h-5z" fill="#0f0"/>`).join("") +
                [141, 257].map((y) => `<path d="M895 ${y - 4.5}h-5l-2 1.5-12 1-9 2v0.5l9 2 12 1 2 1.5h5z" fill="#0f0"/>`).join("") +
                `<line x1="53" y1="511.5" x2="996" y2="511.5" stroke="#20e020" stroke-dasharray="5 3"/>`)}
              <g font-family=${sty} fill="#00ee00" stroke="#00ee00" stroke-width=".5">
                <text x="392" y="134" font-size="68" textLength="69" lengthAdjust="spacingAndGlyphs">610</text>
                <text x="290" y="251" font-size="76" textLength="74" lengthAdjust="spacingAndGlyphs">670</text>
                <text x="481" y="377" font-size="70" textLength="98" lengthAdjust="spacingAndGlyphs">1005</text>
              </g>
              <g font-family=${sty} fill=${dotFill}>
                <text x="437" y="488" font-size="68" textLength="90" lengthAdjust="spacingAndGlyphs">1105</text>
                <text x="543" y="458" font-size="46" textLength="27" lengthAdjust="spacingAndGlyphs">0.</text>
                <text x="576" y="458" font-size="46" textLength="48" lengthAdjust="spacingAndGlyphs">000</text>
                <text x="543" y="503" font-size="46" textLength="27" lengthAdjust="spacingAndGlyphs">0.</text>
                <text x="576" y="503" font-size="46" textLength="48" lengthAdjust="spacingAndGlyphs">000</text>
              </g>
              ${unsafeSVG(
                `<rect x="511" y="445" width="41" height="41" fill="#0a45ff" stroke="#3a5ab0"/>` +
                l(53, 218.5, 996, 218.5, "#fff") + l(132.5, 128, 132.5, 651, "#fff") +
                `<rect x="112.5" y="198.5" width="39" height="40" fill="none" stroke="#fff"/>` +
                `<rect x="64.5" y="628.5" width="10" height="10" fill="none" stroke="#fff"/>` +
                l(69.5, 628, 69.5, 583, "#fff") + l(75, 633.5, 119, 633.5, "#fff") +
                `<path d="M65 583l4.500-11 4.500 11z" fill="none" stroke="#fff"/><path d="M119.500 629v9l12-4.500z" fill="none" stroke="#fff"/>`)}
              <text x="71" y="563" fill="#fff" font-size="15" font-family="Liberation Sans" text-anchor="middle">Y</text>
              <text x="146" y="639" fill="#fff" font-size="15" font-family="Liberation Sans" text-anchor="middle">X</text>
            </svg>
            <div class="tabs">
              <span class="nav">|◀</span><span class="nav">◀</span><span class="nav">▶</span><span class="nav">▶|</span>
              <span class="tab on">模型</span><span class="tab off">Layout1</span>
            </div>
          </div>
          <div class="dockr">
            <div class="vt mod">${modify.map(vcell)}</div>
            <div class="vt ord"><span class="vgrip"></span><span class="spc"></span>${order.map(vcell)}</div>
          </div>
        </div>

        <div class="gapbar"></div>
        <div class="gapbar2"></div>
        <div class="cmd"><span class="grip2"></span><div class="cmdline">命令:</div></div>
        <div class="status">
          <span class="hgt">燕秀字高=2.5</span>
          <span class="coord">-1061.6182, 468.4590, 0.0000</span>
          <span class="sb w27">捕捉</span><span class="sb w28">栅格</span><span class="sb w28">正交</span><span class="sb w27">极轴</span>
          <span class="sb on w52">对象捕捉</span><span class="sb on w52">对象追踪</span>
          <span class="sb on w28 lat">DUCS</span><span class="sb on w22 lat">DYN</span>
          <span class="sb w27">线宽</span><span class="sb on w27">模型</span>
          <span class="traybox"></span>
          <i class="tri"></i><i class="sq"></i>
        </div>
        <div class="taskbar">
          <span class="tk w48"><svg viewBox="0 0 28 28">${unsafeSVG(`<path d="M6 8l7-1v7H6zM14 7l9-1.500V14h-9zM6 15h7v7l-7-1zM14 15h9v8.500l-9-1.500z" fill="#fff"/>`)}</svg></span>
          <span class="tk w50"><svg viewBox="0 0 28 28">${unsafeSVG(c(12, 14, 6.500, "none", "#fff", 2))}</svg></span>
          <span class="tk run"><svg viewBox="0 0 28 28">${unsafeSVG(p("M6 4l8 4 8-4-4 12-4 8-4-8z", "#2a6ae0", "#d03040", 1.5) + p("M3 22c8 2 20-4 23-14", "none", "#f0c030", 3))}</svg></span>
          <span class="tk run"><svg viewBox="0 0 28 28">${unsafeSVG(p("M2 5h8l4 12L18 5h8l-10 20h-4z", "#c81e28", "none") + r(17, 17, 9, 9, "#3a70d8", "none"))}</svg></span>
          <span class="tk run"><svg viewBox="0 0 28 28">${unsafeSVG(c(14, 14, 12, "#e0394a", "none") + r(8, 10, 12, 8, "none", "#fff") + p("M12 14h5", "none", "#fff", 2))}</svg></span>
          <span class="tk run act"><svg viewBox="0 0 28 28">${unsafeSVG(`<rect x="2" y="2" width="24" height="24" fill="#fff"/><rect x="3" y="3" width="22" height="22" fill="#1e8a80"/>` + p("M6 22L12 6h2l4 16M9 16h7", "none", "#fff", 2) + r(16, 14, 6, 8, "#1e8a80", "#fff"))}</svg></span>
          <span class="tk run"><svg viewBox="0 0 28 28">${unsafeSVG(c(14, 14, 11, "#7ecb3a", "#3a8a20", 1.500) + p("M6 14h16M9 10h10M9 18h10", "none", "#fff", 2) + p("M18 2c4 1 7 3 8 7M2 18c1 4 4 7 8 8", "none", "#3a8a20", 1.500))}</svg></span>
          <span class="tk run"><svg viewBox="0 0 28 28">${unsafeSVG(p("M3 5h9l2 3h11v16H3z", "#e8b030", "none") + `<rect x="3" y="11" width="22" height="13" fill="#f7d878"/><rect x="10" y="17" width="8" height="7" fill="#2a78c8"/>`)}</svg></span>
          <span class="tk run"><svg viewBox="0 0 28 28">${unsafeSVG(`<path d="M2 23l8-12 4 6 4-6 8 12-6-3-4 3-4-3z" fill="#6a58d8"/>` + c(17, 6, 3, "#f0a030", "none"))}</svg></span>
          <span class="tk run"><svg viewBox="0 0 28 28">${unsafeSVG(r(4, 4, 20, 20, "#5a9ac8", "#8ac") + c(14, 14, 7, "#fff", "#e08020", 2) + `<path d="M12 10v8l6-4z" fill="#e08020"/>`)}</svg></span>
          <span class="tk run wx"><svg viewBox="0 0 28 28">${unsafeSVG(`<ellipse cx="11" cy="12" rx="9" ry="8" fill="#28c840"/><ellipse cx="18" cy="18" rx="8" ry="6.500" fill="#f4f4f4"/>` + c(8, 10, 1, "#063", "none") + c(14, 10, 1, "#063", "none") + c(15, 17, 1, "#555", "none") + c(21, 17, 1, "#555", "none"))}</svg></span>
          <div class="tray">
            <span class="ti t24"><svg width="14" height="9" viewBox="0 0 14 9">${unsafeSVG(p("M1 8l6-6 6 6", "none", "#fff", 1.4))}</svg></span>
            <span class="ti t23"><svg width="14" height="20" viewBox="0 0 14 20">${unsafeSVG(`<rect x="4" y="1" width="6" height="12" rx="3" fill="#fff"/>` + p("M2 9c0 7 10 7 10 0M7 14v4M4 18h6", "none", "#fff", 1.2))}</svg></span>
            <span class="ti t24"><svg width="18" height="16" viewBox="0 0 18 16">${unsafeSVG(p("M1 6h3l4-4v12l-4-4H1z", "none", "#fff") + p("M11 5c1.500 2 1.500 4 0 6M14 3c2 3 2 7 0 10", "none", "#fff"))}</svg></span>
            <span class="ti t23 ying">英</span>
            <span class="ti t36"><span class="pin">拼</span></span>
            <span class="ti clock"><span>14:15:11</span><span>2022-04-19</span></span>
            <span class="ti t46"><svg width="26" height="26" viewBox="0 0 26 26">${unsafeSVG(p("M3 3h16v12h-9l-3 4v-4H3z", "#fff", "none") + p("M6 7h10M6 10h10", "none", "#888") + c(17, 18, 6.500, "#1e3140", "#ccc", 1.500))}<text x="17" y="22" fill="#fff" font-size="11" font-weight="700" font-family="Liberation Sans" text-anchor="middle">1</text></svg></span>
            <span class="t9"></span>
          </div>
        </div>
      </div>

      <div class="float">
        <span class="fx">${svgI("close")}</span>
        <span class="fp">${svgI("pal")}</span>
        <span class="spacer"></span>
        <span class="vtext">标注</span>
        <span class="b">${svgI("play")}</span>
        <span class="b">${svgI("lst")}</span>
      </div>
      <div class="pink"></div>
      <svg class="cursor" viewBox="0 0 14 22"><path d="M1 1v16l4-4 3 7 3-1-3-7h5z" fill="#fff" stroke="#222"/></svg>
      <svg class="bw" width="1024" height="768" viewBox="0 0 1024 768" pointer-events="none">
        ${unsafeSVG(`<rect x="1015" y="223" width="7" height="56" rx="3" fill="#2cb84a"/><rect x="1015" y="223" width="7" height="9" rx="3.500" fill="#666"/>` +
          Array.from({ length: 22 }, (_, i) => `<line x1="1015" x2="1022" y1="${234 + i * 2}" y2="${234 + i * 2}" stroke="#7dda8a"/>`).join(""))}
      </svg>
      <div class="balloon">
        <svg class="shape" width="186" height="98" viewBox="0 0 186 98">
          <path d="M20 1h144a19 19 0 0 1 19 19v34a19 19 0 0 1-19 19h-23v24l-19-24H20a19 19 0 0 1-19-19V20A19 19 0 0 1 20 1z" fill="#ffffe1" stroke="#000" stroke-width="1.500"/>
        </svg>
        <div class="bbody">
          <div class="bhead">
            <svg width="18" height="18" viewBox="0 0 18 18"><circle cx="9" cy="9" r="8" fill="#2a5fc0"/><circle cx="9" cy="5" r="1.300" fill="#fff"/><path d="M7.500 8h3v6h-3z" fill="#fff"/></svg>
            <b>通讯中心</b>
            <span class="bclose"><svg width="10" height="10" viewBox="0 0 10 10"><path d="M1 1l8 8M9 1L1 9" stroke="#000" stroke-width="2"/></svg></span>
          </div>
          <div class="btxt">使软件保持最新的简单方法。<span class="blink">单击此处。</span></div>
        </div>
      </div>
      <svg class="bw" width="1024" height="768" viewBox="0 0 1024 768" pointer-events="none">
        ${unsafeSVG(`<path d="M929 712l8 14h-16z" fill="#f6d030" stroke="#555"/>` + l(929, 717, 929, 722, "#000", 1.500) +
          l(922, 711, 934, 723, "#2a6aa8") +
          r(943, 716, 12, 9, "#c8a020", "#664") + p("M952 716v-4a3 3 0 0 1 6 0v2", "none", "#664", 2) +
          r(963, 711, 8, 12, "#d8e4f0", "#357") + `<path d="M974 712l8 14h-14z" fill="#f6d030" stroke="#555"/>` + l(975, 717, 975, 722, "#000", 1.500))}
      </svg>
      <div class="timer">00:21</div>
    `;
  }
}
